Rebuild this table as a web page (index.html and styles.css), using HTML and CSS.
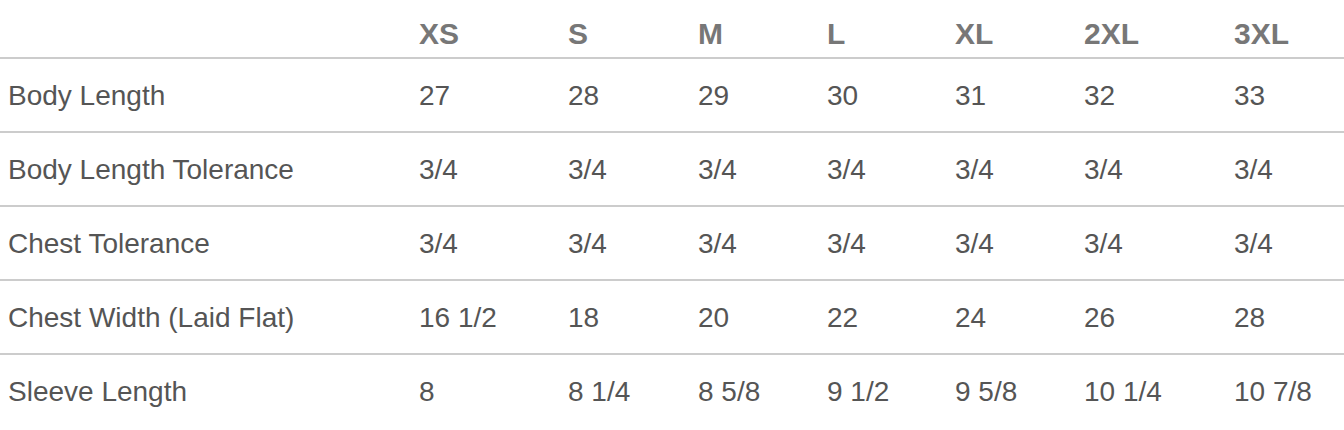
FILE: index.html
```html
<!DOCTYPE html>
<html lang="en">
<head>
<meta charset="utf-8">
<title>Size Chart</title>
<link rel="stylesheet" href="styles.css">
</head>
<body>
<table class="size-chart">
  <colgroup>
    <col class="c-label">
    <col class="c-xs">
    <col class="c-s">
    <col class="c-m">
    <col class="c-l">
    <col class="c-xl">
    <col class="c-2xl">
    <col class="c-3xl">
  </colgroup>
  <thead>
    <tr>
      <th></th>
      <th>XS</th>
      <th>S</th>
      <th>M</th>
      <th>L</th>
      <th>XL</th>
      <th>2XL</th>
      <th>3XL</th>
    </tr>
  </thead>
  <tbody>
    <tr>
      <td>Body Length</td>
      <td>27</td><td>28</td><td>29</td><td>30</td><td>31</td><td>32</td><td>33</td>
    </tr>
    <tr>
      <td>Body Length Tolerance</td>
      <td>3/4</td><td>3/4</td><td>3/4</td><td>3/4</td><td>3/4</td><td>3/4</td><td>3/4</td>
    </tr>
    <tr>
      <td>Chest Tolerance</td>
      <td>3/4</td><td>3/4</td><td>3/4</td><td>3/4</td><td>3/4</td><td>3/4</td><td>3/4</td>
    </tr>
    <tr>
      <td>Chest Width (Laid Flat)</td>
      <td>16 1/2</td><td>18</td><td>20</td><td>22</td><td>24</td><td>26</td><td>28</td>
    </tr>
    <tr class="last">
      <td>Sleeve Length</td>
      <td>8</td><td>8 1/4</td><td>8 5/8</td><td>9 1/2</td><td>9 5/8</td><td>10 1/4</td><td>10 7/8</td>
    </tr>
  </tbody>
</table>
</body>
</html>
```

FILE: styles.css
```css
html, body {
  margin: 0;
  padding: 0;
  background: #ffffff;
}

body {
  font-family: "Liberation Sans", Arial, sans-serif;
  font-size: 28px;
  color: #555555;
}

.size-chart {
  width: 1344px;
  border-collapse: collapse;
  table-layout: fixed;
}

.c-label { width: 411px; }
.c-xs { width: 149px; }
.c-s { width: 130px; }
.c-m { width: 129px; }
.c-l { width: 128px; }
.c-xl { width: 129px; }
.c-2xl { width: 150px; }
.c-3xl { width: 118px; }

.size-chart th,
.size-chart td {
  text-align: left;
  line-height: 32px;
  padding-left: 8px;
  padding-right: 0;
  white-space: nowrap;
}

.size-chart th {
  font-size: 30px;
  font-weight: bold;
  color: #777777;
  padding-top: 18px;
  padding-bottom: 7px;
  vertical-align: bottom;
  border-bottom: 2px solid #cccccc;
}

.size-chart td {
  padding-top: 21px;
  padding-bottom: 19px;
  vertical-align: top;
  border-bottom: 2px solid #cccccc;
}

.size-chart tr.last td {
  border-bottom: none;
}
```
